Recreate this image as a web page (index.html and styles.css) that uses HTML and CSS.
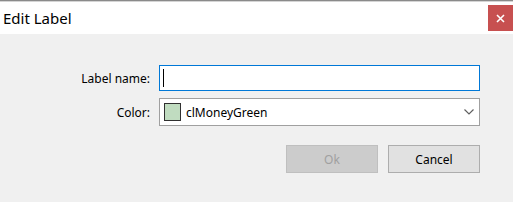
FILE: index.html
```html
<!DOCTYPE html>
<html lang="en">
<head>
    <meta charset="UTF-8">
    <title>Edit Label</title>
    <link rel="stylesheet" href="styles.css">
</head>
<body>
    <div class="window">
        <div class="title-bar">
            <span class="title">Edit Label</span>
            <span class="close-button">
                <svg width="9" height="9" viewBox="0 0 9 9"><path d="M1 1L8 8M8 1L1 8" stroke="#fff" stroke-width="1.6"/></svg>
            </span>
        </div>
        <div class="content">
            <div class="form">
                <label class="field-label">Label name:</label>
                <div class="text-box"><span class="caret"></span></div>
                <label class="field-label">Color:</label>
                <div class="combo">
                    <span class="swatch"></span>
                    <span class="combo-text">clMoneyGreen</span>
                    <svg class="chevron" width="10" height="6" viewBox="0 0 10 6"><path d="M0.5 0.5L5 5L9.5 0.5" fill="none" stroke="#606060" stroke-width="1.2"/></svg>
                </div>
            </div>
            <div class="button-row">
                <button class="dlg-button" disabled>Ok</button>
                <button class="dlg-button">Cancel</button>
            </div>
        </div>
    </div>
</body>
</html>
```

FILE: styles.css
```css
* {
    font-family: "Noto Sans", "Open Sans", sans-serif;
    box-sizing: border-box;
}

body {
    margin: 0;
    width: 513px;
    height: 202px;
    overflow: hidden;
    background-color: #f0f0f0;
}

.window {
    height: 202px;
    display: flex;
    flex-direction: column;
    border-top: 1px solid #8a8a8a;
}

.title-bar {
    height: 33px;
    background: #fff;
    border-top: 1px solid #d4d4d4;
    display: flex;
    justify-content: space-between;
    align-items: flex-start;
}

.title {
    font-size: 15px;
    color: #000;
    padding-left: 3px;
    line-height: 32px;
}

.close-button {
    width: 25px;
    height: 26px;
    margin-top: 3px;
    background-color: #c75050;
    display: flex;
    align-items: center;
    justify-content: center;
}

.content {
    flex: 1;
    padding-top: 31px;
}

.form {
    display: grid;
    grid-template-columns: 150px 321px;
    column-gap: 9px;
    row-gap: 7px;
    align-items: center;
}

.field-label {
    font-size: 12px;
    color: #000;
    text-align: right;
}

.text-box {
    height: 26px;
    background: #fff;
    border: 1px solid #0078d7;
    display: flex;
    align-items: center;
    padding-left: 3px;
}

.caret {
    width: 1px;
    height: 18px;
    background: #000;
}

.combo {
    height: 28px;
    background: #fff;
    border: 1px solid #a0a0a0;
    display: flex;
    align-items: center;
    padding: 0 5px 0 4px;
}

.swatch {
    width: 17px;
    height: 18px;
    background-color: #c0dcc0;
    border: 1px solid #303030;
}

.combo-text {
    flex: 1;
    font-size: 12px;
    margin-left: 5px;
    color: #000;
}

.chevron {
    margin-right: 0;
}

.button-row {
    display: flex;
    justify-content: flex-end;
    gap: 10px;
    width: 480px;
    margin-top: 19px;
}

.dlg-button {
    width: 92px;
    height: 28px;
    font-size: 12px;
    background-color: #e1e1e1;
    border: 1px solid #adadad;
    color: #000;
    padding: 0;
}

.dlg-button:disabled {
    background-color: #cccccc;
    border-color: #bfbfbf;
    color: #a0a0a0;
}
```
